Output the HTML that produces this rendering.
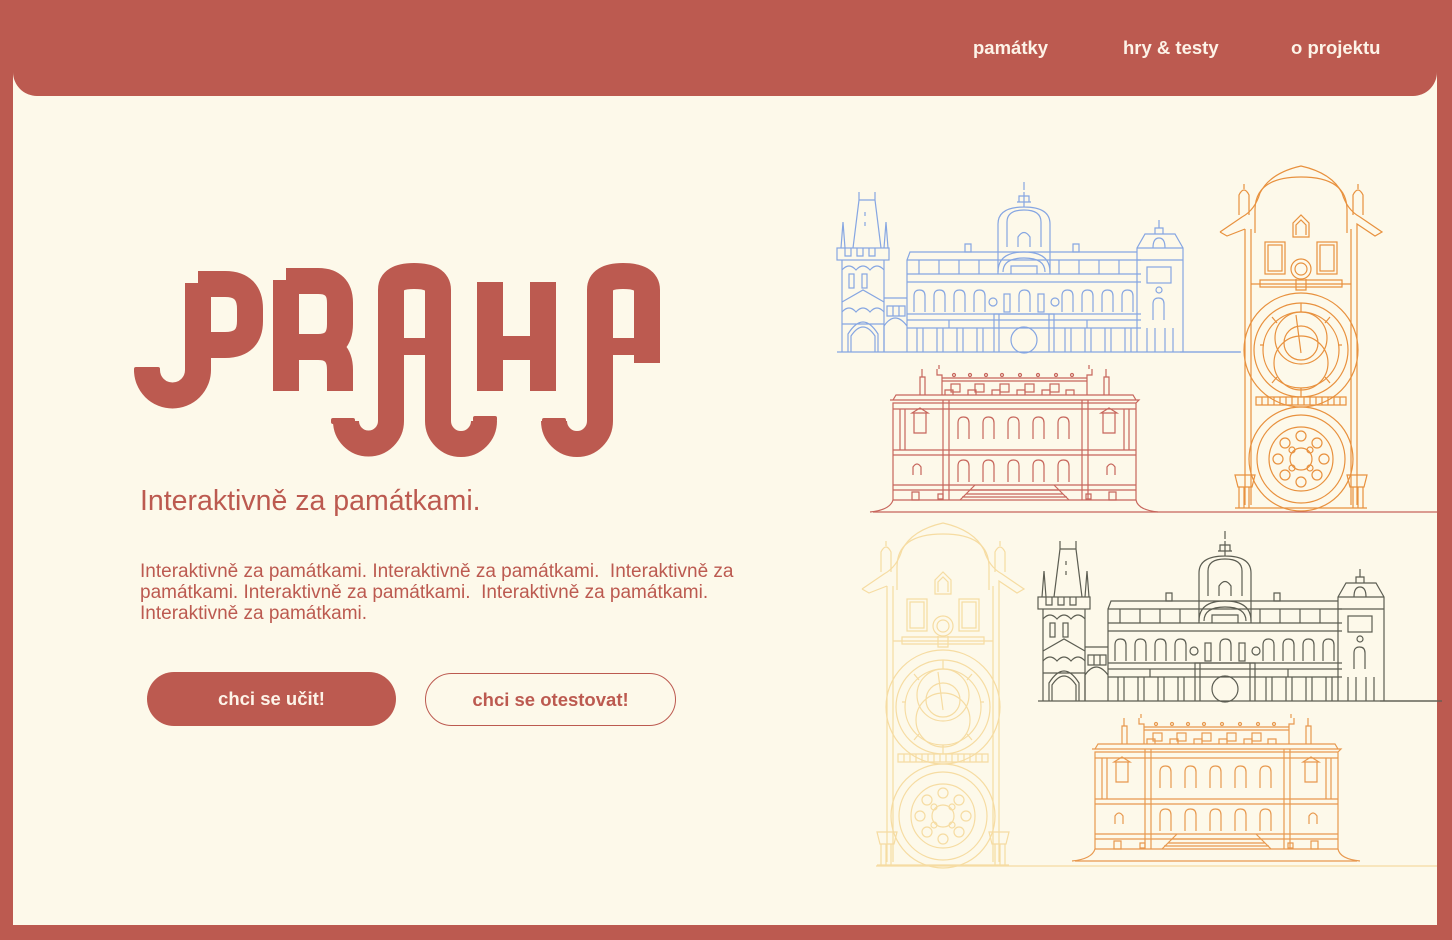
<!DOCTYPE html>
<html><head><meta charset="utf-8"><style>
*{margin:0;padding:0;box-sizing:border-box}
body{width:1452px;height:940px;background:#bc5a50;position:relative;overflow:hidden;font-family:"Liberation Sans",sans-serif}
#cream{position:absolute;left:13px;top:60px;width:1424px;height:865px;background:#fdf9ea}
#bar{position:absolute;left:0;top:0;width:1452px;height:60px;background:#bc5a50}
#barb{position:absolute;left:13px;top:40px;width:1424px;height:56px;background:#bc5a50;border-radius:0 0 24px 24px}
.nav{position:absolute;top:37px;color:#fdf3e8;font-weight:bold;font-size:18.5px}
#sub{position:absolute;left:140px;top:485px;font-size:28.5px;color:#bc5a50}
#para{position:absolute;left:140px;top:561px;font-size:19px;line-height:21px;color:#bc5a50;white-space:nowrap}
.btn{position:absolute;height:54px;border-radius:27px;font-weight:bold;font-size:18.5px;text-align:center;line-height:54px}
#b1{left:147px;top:672px;width:249px;background:#bc5a50;color:#fdf3e8}
#b2{left:425px;top:673px;width:251px;height:53px;line-height:51px;border:1.3px solid #bc5a50;color:#bc5a50}
svg{position:absolute;left:0;top:0}
</style></head><body>
<div id="cream"></div><div id="bar"></div><div id="barb"></div>
<div class="nav" style="left:973px">památky</div>
<div class="nav" style="left:1123px">hry &amp; testy</div>
<div class="nav" style="left:1291px">o projektu</div>
<div id="sub">Interaktivně za památkami.</div>
<div id="para">Interaktivně za památkami. Interaktivně za památkami.&nbsp; Interaktivně za<br>památkami. Interaktivně za památkami.&nbsp; Interaktivně za památkami.<br>Interaktivně za památkami.</div>
<div class="btn" id="b1">chci se učit!</div>
<div class="btn" id="b2">chci se otestovat!</div>

<svg width="1452" height="940" viewBox="0 0 1452 940">
<defs>
<symbol id="aw" overflow="visible"><path d="M0 22V6Q0 0 5.5 0Q11 0 11 6V22" fill="none" stroke="currentColor"/></symbol>
<symbol id="hall" overflow="visible">
<g fill="none" stroke="currentColor" stroke-width="1.2">
<path d="M0 170H404"/>
<path d="M16 66L22 18H38L44 66M22 18L22 10M38 18L38 10"/>
<path d="M4 66L6 40L8 66M47 66L49 40L51 66M28 30V34M28 40V44"/>
<rect x="0" y="66" width="52" height="12"/><path d="M8 66v8h6v-8M20 66v8h6v-8M32 66v8h6v-8"/>
<path d="M5 78V170M47 78V170M5 88Q12 80 19 88Q26 80 33 88Q40 80 47 88"/>
<rect x="12" y="92" width="5" height="14"/><rect x="25" y="92" width="5" height="14"/>
<path d="M5 120L26 108L47 120M5 130Q12 122 19 130Q26 122 33 130Q40 122 47 130M5 142H47M11 170V152Q26 128 41 152V170M14 170V154Q26 136 38 154V170"/>
<path d="M47 116H70M47 170V144Q58 128 70 144M50 124h18v10h-18zM56 124v10M62 124v10"/>
<path d="M70 170V78L73 70H300M70 78H304M70 92H304M70 100H304M70 132H304M70 138H304M70 146H304"/>
<path d="M82 78V92M102 78V92M122 78V92M142 78V92M222 78V92M242 78V92M262 78V92M282 78V92"/>
<use href="#aw" x="77" y="108"/><use href="#aw" x="97" y="108"/><use href="#aw" x="117" y="108"/><use href="#aw" x="137" y="108"/>
<use href="#aw" x="182" y="108"/><use href="#aw" x="225" y="108"/><use href="#aw" x="245" y="108"/><use href="#aw" x="265" y="108"/><use href="#aw" x="285" y="108"/>
<path d="M80 146V170M86 146V170M100 146V170M106 146V170M120 146V170M126 146V170M140 146V170M146 146V170M228 146V170M234 146V170M248 146V170M254 146V170M268 146V170M274 146V170M288 146V170M294 146V170M112 138V146M250 138V146"/>
<path d="M128 62h6v8h-6zM236 62h6v8h-6z"/>
<path d="M161 92V42Q161 25 187 25Q213 25 213 42V92M170 65V40Q170 28 187 28Q204 28 204 40V65M187 25V10M180 20H194M182 20V14H192V20M187 8V0"/>
<path d="M181 65V55Q187 46 193 55V65M161 90Q161 70 187 70Q213 70 213 90M166 90Q166 76 187 76Q208 76 208 90M174 92V84H200V92"/>
<path d="M157 170V132H217V170M162 132V170M212 132V170"/><circle cx="187" cy="158" r="13"/>
<circle cx="156" cy="120" r="4"/><circle cx="218" cy="120" r="4"/>
<rect x="167" y="112" width="6" height="18"/><rect x="201" y="112" width="6" height="18"/>
<path d="M300 170V66L308 52H338L346 66V170M300 78H346M300 66H346M318 52V46H326V52M322 46V38"/>
<path d="M316 66Q316 56 322 56Q328 56 328 66"/><rect x="310" y="85" width="24" height="16"/><circle cx="322" cy="108" r="3"/><use href="#aw" x="316" y="116"/>
<path d="M310 146V170M318 146V170M328 146V170M336 146V170"/>
</g></symbol>

<symbol id="clock" overflow="visible">
<g fill="none" stroke="currentColor" stroke-width="1.2">
<path d="M0 67L22 52Q35 45 40 28Q50 8 81 1Q112 8 122 28Q127 45 140 52L162 67L155 71L137 59V64M25 64L7 71L0 67"/>
<path d="M35 68V45Q35 12 81 12Q127 12 127 45V68"/>
<path d="M19 50V30Q24 20 29 30V50M133 50V30Q138 20 143 30V50M24 24V19M138 24V19"/>
<path d="M25 64V340M31 64V340M131 64V340M137 64V340"/>
<path d="M73 72V58L81 50L89 58V72ZM76 70V60L81 55L86 60V70"/>
<rect x="45" y="77" width="20" height="32"/><rect x="48" y="80" width="14" height="26"/>
<rect x="97" y="77" width="20" height="32"/><rect x="100" y="80" width="14" height="26"/>
<circle cx="81" cy="104" r="10"/><circle cx="81" cy="104" r="6"/>
<path d="M31 119H131M40 115H122V122H40ZM76 114V125H86V114"/>
<circle cx="81" cy="185" r="57"/><circle cx="81" cy="185" r="47"/><circle cx="81" cy="185" r="38"/>
<circle cx="81" cy="173" r="26"/><circle cx="81" cy="198" r="27"/><circle cx="81" cy="178" r="17"/>
<path d="M76 150L81 188M40 180H44M118 180H122M81 138V147M81 223V232M52 152L57 158M110 152L105 158M52 218L57 212M110 218L105 212"/>
<path d="M36 232H126V240H36Z M42 232V240M48 232V240M54 232V240M60 232V240M66 232V240M72 232V240M78 232V240M84 232V240M90 232V240M96 232V240M102 232V240M108 232V240M114 232V240M120 232V240"/>
<circle cx="81" cy="294" r="52"/><circle cx="81" cy="294" r="44"/><circle cx="81" cy="294" r="32"/><circle cx="81" cy="294" r="11"/>
<circle cx="81" cy="271" r="5"/><circle cx="81" cy="317" r="5"/><circle cx="58" cy="294" r="5"/><circle cx="104" cy="294" r="5"/>
<circle cx="65" cy="278" r="5"/><circle cx="97" cy="278" r="5"/><circle cx="65" cy="310" r="5"/><circle cx="97" cy="310" r="5"/>
<circle cx="72" cy="285" r="3"/><circle cx="90" cy="285" r="3"/><circle cx="72" cy="303" r="3"/><circle cx="90" cy="303" r="3"/>
<path d="M15 310H35L32 322H18ZM127 310H147L144 322H130ZM19 322V343M24 322V343M29 322V343M133 322V343M138 322V343M143 322V343M15 343H147"/>
</g></symbol>

<symbol id="rudo" overflow="visible">
<g fill="none" stroke="currentColor" stroke-width="1.2">
<path d="M0 147Q20 145 23 135M266 135Q268 145 288 147"/>
<path d="M23 38H266V135H23Z M20 35H269L266 38M23 35L26 30H263L266 35M23 44H266M23 85H266M23 90H266M23 120H266M23 125H266"/>
<path d="M50 30V12H55V30M234 30V12H239V30M52 12V4M236 12V4M72 30V10H67V4M217 30V10H222V4M69 4V0M219 4V0"/>
<path d="M72 13H217M72 16H217"/>
<rect x="81" y="19" width="9" height="8"/><rect x="105" y="19" width="9" height="8"/><rect x="130" y="19" width="9" height="8"/><rect x="155" y="19" width="9" height="8"/><rect x="180" y="19" width="9" height="8"/>
<circle cx="84" cy="10" r="1.5"/><circle cx="100" cy="10" r="1.5"/><circle cx="116" cy="10" r="1.5"/><circle cx="132" cy="10" r="1.5"/><circle cx="150" cy="10" r="1.5"/><circle cx="168" cy="10" r="1.5"/><circle cx="186" cy="10" r="1.5"/><circle cx="202" cy="10" r="1.5"/>
<path d="M75 30V25h8v5M98 30V25h8v5M122 30V25h8v5M147 30V25h8v5M172 30V25h8v5M196 30V25h8v5"/>
<path d="M73 35V135M79 35V135M212 35V135M218 35V135M30 44V85M35 44V85M254 44V85M259 44V85"/>
<path d="M42 48L50 43L58 48H42ZM44 48V68H56V48M231 48L239 43L247 48H231ZM233 48V68H245V48"/>
<use href="#aw" x="88" y="52"/><use href="#aw" x="113" y="52"/><use href="#aw" x="138" y="52"/><use href="#aw" x="163" y="52"/><use href="#aw" x="188" y="52"/>
<use href="#aw" x="88" y="95"/><use href="#aw" x="113" y="95"/><use href="#aw" x="138" y="95"/><use href="#aw" x="163" y="95"/><use href="#aw" x="188" y="95"/>
<path d="M43 110V102Q47 96 51 102V110M237 110V102Q241 96 245 102V110"/>
<path d="M42 127h7v8h-7zM239 127h7v8h-7zM68 129h5v5h-5zM216 129h5v5h-5z"/>
<path d="M105 120L90 135M184 120L199 135M100 125H189M96 129H193M92 132H197"/>
<path d="M3 147H285"/>
</g></symbol>
</defs>

<g fill="none" stroke="#bc5a50" stroke-width="26" stroke-linejoin="round">
<path d="M198 283V370A25 25 0 0 1 147 370"/>
<path d="M198 284H225Q250 284 250 309V321Q250 345 225 345H198"/>
<path d="M286 280V391"/>
<path d="M286 281H318Q340 281 340 303V324Q340 347 318 347H286M318 347Q340 347 340 370V391"/>
<path d="M391 421V290Q391 276 414 276Q438 276 438 290V421A23 23 0 0 0 484 421"/>
<path d="M391 421A22 22 0 0 1 346 421"/>
<path d="M490 282V391M543 282V391"/>
<path d="M600 421V290Q600 276 623 276Q647 276 647 290V363"/>
<path d="M600 421A23 23 0 0 1 554 421"/>
</g>
<g fill="#bc5a50">
<rect x="134" y="367" width="26" height="6" rx="2"/>
<rect x="331" y="418" width="24" height="6" rx="2"/>
<rect x="473" y="416" width="24" height="6" rx="2"/>
<rect x="542" y="418" width="24" height="6" rx="2"/>
<rect x="403" y="338" width="23" height="17"/>
<rect x="612" y="338" width="24" height="17"/>
<rect x="500" y="336" width="35" height="24"/>
</g>

<use href="#hall" x="837" y="182" style="color:#86a6e2"/>
<path d="M1180 352H1240" stroke="#86a6e2" stroke-width="1.2"/>
<use href="#clock" x="1220" y="165" style="color:#e8913e"/>
<use href="#rudo" x="870" y="365" style="color:#c7665c"/>
<path d="M1155 512H1437" stroke="#c7665c" stroke-width="1.2"/>
<use href="#clock" x="862" y="522" style="color:#f6dca2"/>
<use href="#hall" x="1038" y="531" style="color:#5c5d52"/>
<path d="M1380 701H1437" stroke="#5c5d52" stroke-width="1.2"/>
<use href="#rudo" x="1072" y="714" style="color:#e8994f"/>
<path d="M876 866H1437" stroke="#f6dca2" stroke-width="1.2"/>
</svg>
</body></html>
